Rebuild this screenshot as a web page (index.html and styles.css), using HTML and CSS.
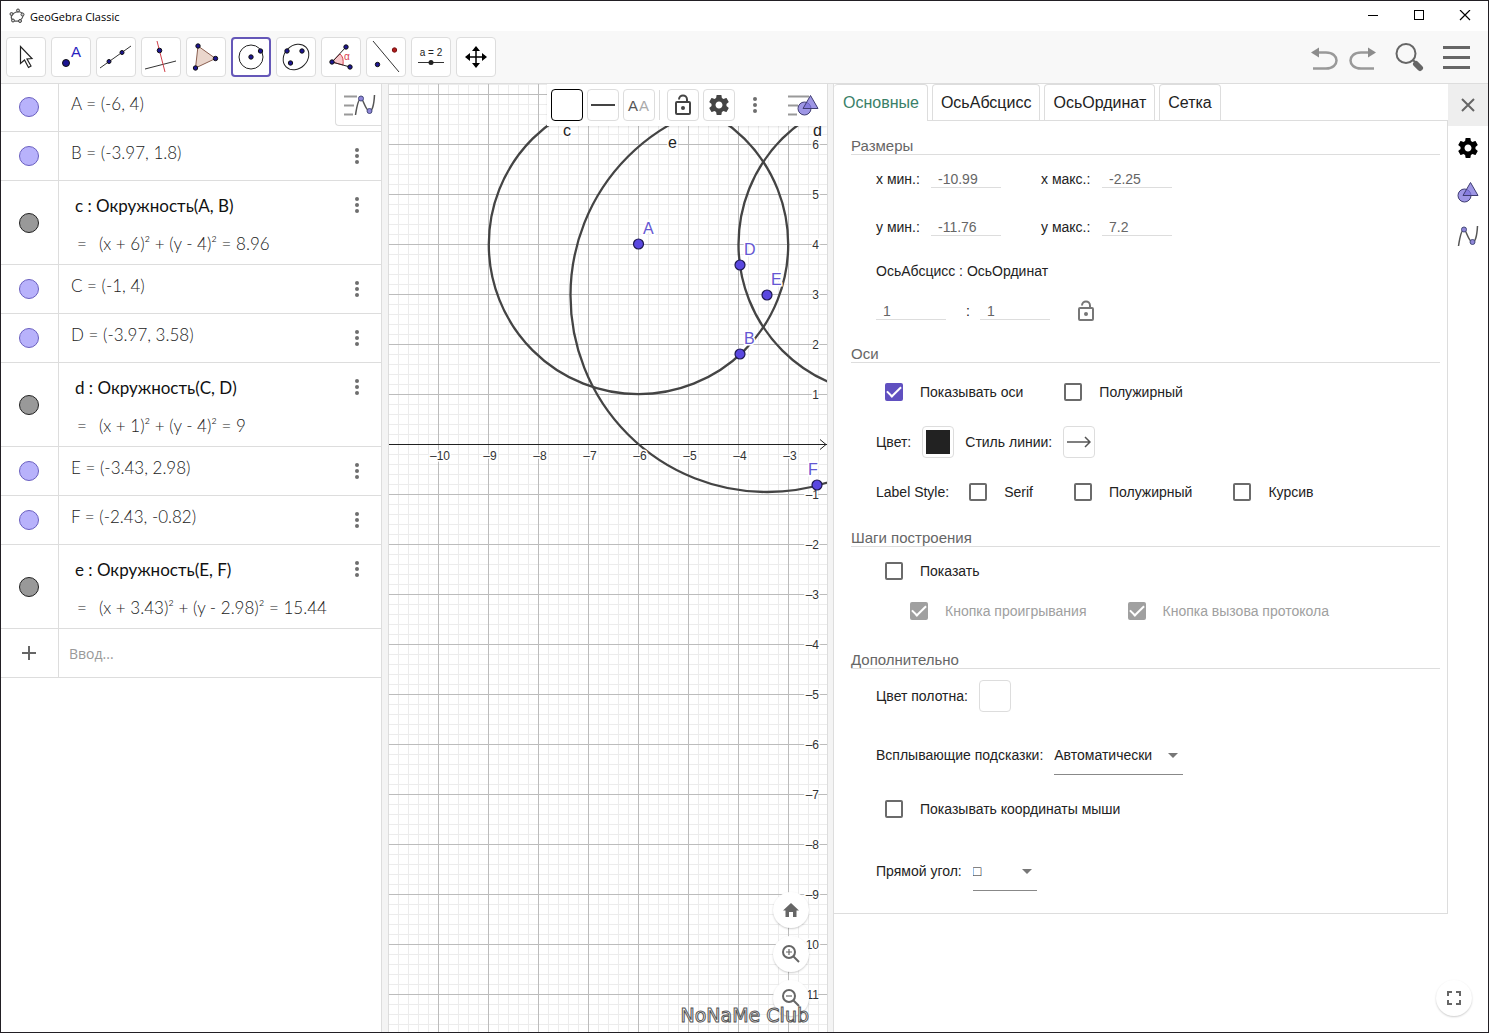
FILE: index.html
```html
<!DOCTYPE html>
<html lang="ru">
<head>
    <meta charset="UTF-8">
    <meta name="viewport" content="width=device-width, initial-scale=1.0">
    <title>GeoGebra Classic</title>
    <link rel="stylesheet" href="styles.css">
</head>
<body>
    <!-- Shared icons -->
    <svg class="defs" width="0" height="0" aria-hidden="true">
        <symbol id="dots" viewBox="0 0 24 24">
            <g fill="#6e6e6e"><circle cx="12" cy="6" r="2"/><circle cx="12" cy="12" r="2"/><circle cx="12" cy="18" r="2"/></g>
        </symbol>
        <symbol id="gear" viewBox="0 0 24 24">
            <path d="M19.43 12.98c.04-.32.07-.64.07-.98s-.03-.66-.07-.98l2.11-1.65c.19-.15.24-.42.12-.64l-2-3.46c-.12-.22-.39-.3-.61-.22l-2.49 1c-.52-.4-1.08-.73-1.69-.98l-.38-2.65C14.46 2.18 14.25 2 14 2h-4c-.25 0-.46.18-.49.42l-.38 2.65c-.61.25-1.17.59-1.69.98l-2.49-1c-.23-.09-.49 0-.61.22l-2 3.46c-.13.22-.07.49.12.64l2.11 1.65c-.04.32-.07.65-.07.98s.03.66.07.98l-2.11 1.65c-.19.15-.24.42-.12.64l2 3.46c.12.22.39.3.61.22l2.49-1c.52.4 1.08.73 1.69.98l.38 2.65c.03.24.24.42.49.42h4c.25 0 .46-.18.49-.42l.38-2.65c.61-.25 1.17-.59 1.69-.98l2.49 1c.23.09.49 0 .61-.22l2-3.46c.12-.22.07-.49-.12-.64l-2.11-1.65zM12 15.5c-1.93 0-3.5-1.57-3.5-3.5s1.57-3.5 3.5-3.5 3.5 1.57 3.5 3.5-1.57 3.5-3.5 3.5z"/>
        </symbol>
        <symbol id="lock" viewBox="0 0 24 24">
            <g fill="none" stroke="currentColor" stroke-width="2">
                <rect x="5" y="9" width="14" height="12" rx="1"/>
                <path d="M8 6.500C8 1 16 1 16 6.500V9"/>
            </g>
            <circle cx="12" cy="15" r="2" fill="currentColor"/>
        </symbol>
        <symbol id="shapes" viewBox="0 0 24 24">
            <g fill="#7d73dc" fill-opacity=".75" stroke="#3f3c72" stroke-width="1">
                <circle cx="8.500" cy="15.500" r="6.500"/>
                <path d="M14.500 2.500L22 15.500H7z"/>
            </g>
        </symbol>
        <symbol id="curve" viewBox="0 0 24 24">
            <path d="M2.500 22C4 12 6 5.500 8 5.500S12.500 17 16 18s5-7 5.500-16" fill="none" stroke="#555" stroke-width="1.500"/>
            <g fill="#8f86d8" stroke="#444a7a"><circle cx="8" cy="5.500" r="2.500"/><circle cx="16.500" cy="18" r="2.500"/></g>
        </symbol>
    </svg>

    <div class="window">
        <header class="titlebar">
            <svg class="logo" width="16" height="16" viewBox="0 0 16 16">
                <ellipse cx="8" cy="8.500" rx="6" ry="4.500" fill="none" stroke="#555" stroke-width="1.200" transform="rotate(-20 8 8)"/>
                <g fill="#ccc" stroke="#444" stroke-width="1">
                    <circle cx="9" cy="2.500" r="1.500"/><circle cx="2.500" cy="6" r="1.500"/><circle cx="13.500" cy="6.500" r="1.500"/><circle cx="4" cy="12.500" r="1.500"/><circle cx="11" cy="13" r="1.500"/>
                </g>
            </svg>
            <span class="title">GeoGebra Classic</span>
            <div class="window-buttons">
                <button aria-label="Свернуть"><svg width="12" height="12"><path d="M1 5.500h10" stroke="#000"/></svg></button>
                <button aria-label="Развернуть"><svg width="12" height="12"><rect x="1.500" y=".500" width="9" height="9" fill="none" stroke="#000"/></svg></button>
                <button aria-label="Закрыть окно"><svg width="12" height="12"><path d="M1 0l10 10M11 0L1 10" stroke="#000" stroke-width="1.200"/></svg></button>
            </div>
        </header>

        <nav class="toolbar">
            <button class="tool" aria-label="Перемещать">
                <svg width="32" height="32"><path d="M10.500 5.500v17l4-3.500 4 7.500 2.500-1.500-4-7 5-.500z" fill="#fff" stroke="#222" stroke-width="1.200"/></svg>
            </button>
            <button class="tool" aria-label="Точка">
                <svg width="32" height="32"><circle cx="11" cy="22" r="3.500" fill="#1c1593" stroke="#111"/><text x="16" y="16" font-size="15" fill="#2a1fc0">A</text></svg>
            </button>
            <button class="tool" aria-label="Прямая">
                <svg width="32" height="32"><path d="M0 27L31 5" stroke="#333"/><g fill="#1c1593" stroke="#111"><circle cx="9" cy="20.500" r="2"/><circle cx="22" cy="11.500" r="2"/></g></svg>
            </button>
            <button class="tool" aria-label="Перпендикулярная прямая">
                <svg width="32" height="32"><path d="M0 28l31-8" stroke="#333"/><path d="M12 0l8 31" stroke="#d0404a"/><circle cx="14.500" cy="9.500" r="2.300" fill="#1c1593" stroke="#111"/></svg>
            </button>
            <button class="tool" aria-label="Многоугольник">
                <svg width="32" height="32"><path d="M8 5l17.500 12.500L5.500 27z" fill="#ead6cc" stroke="#8a5f50"/><g fill="#1c1593" stroke="#111"><circle cx="8" cy="5" r="2.200"/><circle cx="25.500" cy="17.500" r="2.200"/><circle cx="5.500" cy="27" r="2.200"/></g></svg>
            </button>
            <button class="tool active" aria-label="Окружность по центру и точке">
                <svg width="32" height="32"><circle cx="16" cy="16" r="12" fill="none" stroke="#222"/><g fill="#1c1593" stroke="#111"><circle cx="16" cy="16" r="2.200"/><circle cx="25.500" cy="10" r="2.200"/></g></svg>
            </button>
            <button class="tool" aria-label="Эллипс">
                <svg width="32" height="32"><ellipse cx="16" cy="16" rx="14" ry="11.500" transform="rotate(-45 16 16)" fill="none" stroke="#222"/><g fill="#1c1593" stroke="#111"><circle cx="7" cy="10" r="2.200"/><circle cx="22" cy="10" r="2.200"/><circle cx="10.500" cy="22" r="2.200"/></g></svg>
            </button>
            <button class="tool" aria-label="Угол">
                <svg width="32" height="32"><path d="M7 21l8-8q4 3 3 11z" fill="#f8c8cc" stroke="#d84050"/><path d="M7 21L21 6M7 21l18 5" stroke="#222"/><g fill="#1c1593" stroke="#111"><circle cx="7" cy="21" r="2.200"/><circle cx="21" cy="6" r="2.200"/><circle cx="25" cy="26" r="2.200"/></g><text x="19" y="19" font-size="10" fill="#d84050">α</text></svg>
            </button>
            <button class="tool" aria-label="Отражение относительно прямой">
                <svg width="32" height="32"><path d="M3 0l26 31" stroke="#333"/><circle cx="7.500" cy="23.500" r="2.200" fill="#1c1593" stroke="#111"/><circle cx="24.500" cy="9" r="2.200" fill="#b01c1c" stroke="#711"/></svg>
            </button>
            <button class="tool" aria-label="Ползунок">
                <svg width="32" height="32"><text x="16" y="15" font-size="10" text-anchor="middle" fill="#222">a = 2</text><path d="M3 21.500h26" stroke="#333"/><circle cx="16" cy="21.500" r="2.500" fill="#222"/></svg>
            </button>
            <button class="tool" aria-label="Переместить чертёж">
                <svg width="32" height="32"><path d="M16 8v16M8 16h16" stroke="#000" stroke-width="1.500"/><path d="M16 5l4 5h-8zM16 27l4-5h-8zM5 16l5-4v8zM27 16l-5-4v8z"/></svg>
            </button>

            <div class="toolbar-right">
                <button aria-label="Отменить"><svg width="30" height="30"><path d="M7 10.500h9c14 0 14 16 0 16H3" fill="none" stroke="#999" stroke-width="2.500"/><path d="M1 10.500l8-5v10z" fill="#8c8c8c"/></svg></button>
                <button aria-label="Повторить"><svg width="30" height="30"><path d="M23 10.500h-9c-14 0-14 16 0 16h13" fill="none" stroke="#999" stroke-width="2.500"/><path d="M29 10.500l-8-5v10z" fill="#8c8c8c"/></svg></button>
                <button class="search" aria-label="Поиск"><svg width="30" height="30"><circle cx="11" cy="11.500" r="9.500" fill="none" stroke="#666" stroke-width="2"/><path d="M18 18l3 3" stroke="#666" stroke-width="2"/><path d="M21 22l4 4" stroke="#666" stroke-width="6" stroke-linecap="round"/></svg></button>
                <button class="menu" aria-label="Меню"><svg width="30" height="30"><path d="M2 5.500h27M2 15.500h27M2 25.500h27" stroke="#666" stroke-width="3"/></svg></button>
            </div>
        </nav>

        <main class="views">
            <section class="algebra">
                <button class="view-toggle" aria-label="Панель объектов">
                    <svg width="34" height="24"><path d="M0 3.500h13M0 12.500h10M0 21.500h9" stroke="#999" stroke-width="2"/><use href="#curve" x="9" y="0" width="24" height="24"/></svg>
                </button>
                <ul class="objects">
                    <li class="object">
                        <div class="marble-cell"><button class="marble" aria-label="A"></button></div>
                        <div class="expression">A = (-6, 4)</div>
                    </li>
                    <li class="object">
                        <div class="marble-cell"><button class="marble" aria-label="B"></button></div>
                        <div class="expression">B = (-3.97, 1.8)</div>
                        <button class="more" aria-label="Ещё"><svg width="24" height="24"><use href="#dots"/></svg></button>
                    </li>
                    <li class="object tall">
                        <div class="marble-cell"><button class="marble grey" aria-label="c"></button></div>
                        <div class="expression">
                            <div class="command">c : Окружность(A, B)</div>
                            <div class="result">=<span class="equation">(x + 6)² + (y - 4)² = 8.96</span></div>
                        </div>
                        <button class="more" aria-label="Ещё"><svg width="24" height="24"><use href="#dots"/></svg></button>
                    </li>
                    <li class="object">
                        <div class="marble-cell"><button class="marble" aria-label="C"></button></div>
                        <div class="expression">C = (-1, 4)</div>
                        <button class="more" aria-label="Ещё"><svg width="24" height="24"><use href="#dots"/></svg></button>
                    </li>
                    <li class="object">
                        <div class="marble-cell"><button class="marble" aria-label="D"></button></div>
                        <div class="expression">D = (-3.97, 3.58)</div>
                        <button class="more" aria-label="Ещё"><svg width="24" height="24"><use href="#dots"/></svg></button>
                    </li>
                    <li class="object tall">
                        <div class="marble-cell"><button class="marble grey" aria-label="d"></button></div>
                        <div class="expression">
                            <div class="command">d : Окружность(C, D)</div>
                            <div class="result">=<span class="equation">(x + 1)² + (y - 4)² = 9</span></div>
                        </div>
                        <button class="more" aria-label="Ещё"><svg width="24" height="24"><use href="#dots"/></svg></button>
                    </li>
                    <li class="object">
                        <div class="marble-cell"><button class="marble" aria-label="E"></button></div>
                        <div class="expression">E = (-3.43, 2.98)</div>
                        <button class="more" aria-label="Ещё"><svg width="24" height="24"><use href="#dots"/></svg></button>
                    </li>
                    <li class="object">
                        <div class="marble-cell"><button class="marble" aria-label="F"></button></div>
                        <div class="expression">F = (-2.43, -0.82)</div>
                        <button class="more" aria-label="Ещё"><svg width="24" height="24"><use href="#dots"/></svg></button>
                    </li>
                    <li class="object tall">
                        <div class="marble-cell"><button class="marble grey" aria-label="e"></button></div>
                        <div class="expression">
                            <div class="command">e : Окружность(E, F)</div>
                            <div class="result">=<span class="equation">(x + 3.43)² + (y - 2.98)² = 15.44</span></div>
                        </div>
                        <button class="more" aria-label="Ещё"><svg width="24" height="24"><use href="#dots"/></svg></button>
                    </li>
                    <li class="object">
                        <div class="marble-cell"><svg width="16" height="16"><path d="M8 1v14M1 8h14" stroke="#666" stroke-width="2"/></svg></div>
                        <input class="new-object" type="text" placeholder="Ввод..." aria-label="Ввод">
                    </li>
                </ul>
            </section>

            <div class="splitter"></div>

            <section class="graphics">
                <svg class="plot" width="100%" height="100%">
                    <defs>
                        <pattern id="minor" x="9" y="0" width="10" height="10" patternUnits="userSpaceOnUse">
                            <path d="M0 .500H10M.500 0V10" stroke="#ececec"/>
                        </pattern>
                        <pattern id="major" x="49" y="10" width="50" height="50" patternUnits="userSpaceOnUse">
                            <path d="M0 .500H50M.500 0V50" stroke="#bcbcbc"/>
                        </pattern>
                    </defs>
                    <rect width="100%" height="100%" fill="url(#minor)"/>
                    <rect width="100%" height="100%" fill="url(#major)"/>
                    <path d="M0 360.500h2000" stroke="#222"/>
                    <svg x="100%" y="0" overflow="visible"><path d="M-7 355.500l6 5-6 5" fill="none" stroke="#222"/></svg>

                    <g fill="none" stroke="#444" stroke-width="2.300">
                        <circle cx="249.500" cy="160.500" r="149.700"/>
                        <circle cx="499.500" cy="160.500" r="150"/>
                        <circle cx="378" cy="211.500" r="196.500"/>
                    </g>

                    <g class="ticks" text-anchor="middle">
                        <text x="51" y="376">–10</text>
                        <text x="101" y="376">–9</text>
                        <text x="151" y="376">–8</text>
                        <text x="201" y="376">–7</text>
                        <text x="251" y="376">–6</text>
                        <text x="301" y="376">–5</text>
                        <text x="351" y="376">–4</text>
                        <text x="401" y="376">–3</text>
                    </g>
                    <svg x="100%" y="0" overflow="visible">
                        <g class="ticks" text-anchor="end">
                            <text x="-8" y="65">6</text>
                            <text x="-8" y="115">5</text>
                            <text x="-8" y="165">4</text>
                            <text x="-8" y="215">3</text>
                            <text x="-8" y="265">2</text>
                            <text x="-8" y="315">1</text>
                            <text x="-8" y="415">–1</text>
                            <text x="-8" y="465">–2</text>
                            <text x="-8" y="515">–3</text>
                            <text x="-8" y="565">–4</text>
                            <text x="-8" y="615">–5</text>
                            <text x="-8" y="665">–6</text>
                            <text x="-8" y="715">–7</text>
                            <text x="-8" y="765">–8</text>
                            <text x="-8" y="815">–9</text>
                            <text x="-8" y="865">10</text>
                            <text x="-8" y="915">11</text>
                        </g>
                    </svg>

                    <g fill="#5a48e0" stroke="#1d1850" stroke-width="1.200">
                        <circle cx="249.500" cy="160" r="5"/>
                        <circle cx="351" cy="270" r="5"/>
                        <circle cx="351" cy="181" r="5"/>
                        <circle cx="378" cy="211" r="5"/>
                        <circle cx="428" cy="401" r="5"/>
                    </g>
                    <g class="point-labels">
                        <text x="254" y="150">A</text>
                        <text x="355" y="260">B</text>
                        <text x="355" y="171">D</text>
                        <text x="382" y="201">E</text>
                        <text x="419" y="391">F</text>
                    </g>
                    <g class="circle-labels">
                        <text x="174" y="52">c</text>
                        <text x="279" y="64">e</text>
                        <text x="424" y="52">d</text>
                    </g>
                </svg>

                <div class="stylebar">
                    <button class="style-button selected" aria-label="Цвет объекта"></button>
                    <button class="style-button" aria-label="Стиль линии"><svg width="24" height="24"><path d="M0 12h24" stroke="#444" stroke-width="2"/></svg></button>
                    <button class="style-button" aria-label="Надпись"><svg width="24" height="24"><text x="1" y="18" font-size="15" fill="#555">A</text><text x="12" y="18" font-size="15" fill="#aaa">A</text></svg></button>
                    <span class="divider"></span>
                    <button class="style-button locked" aria-label="Закрепить"><svg width="24" height="24"><use href="#lock"/></svg></button>
                    <button class="style-button" aria-label="Настройки объекта"><svg width="24" height="24" fill="#444"><use href="#gear"/></svg></button>
                    <button class="style-button plain" aria-label="Ещё"><svg width="24" height="24"><use href="#dots"/></svg></button>
                    <button class="stylebar-toggle" aria-label="Панель стилей"><svg width="34" height="24"><path d="M1 3.500h21M1 12.500h10M1 21.500h9" stroke="#999" stroke-width="2"/><use href="#shapes" x="9" y="0" width="24" height="24"/></svg></button>
                </div>

                <div class="zoom-buttons">
                    <button class="round" aria-label="Исходный вид"><svg width="20" height="20"><path d="M10 3L2 10.500h2.500V17H8v-5h4v5h3.500v-6.500H18z" fill="#666"/></svg></button>
                    <button class="round" aria-label="Увеличить"><svg width="20" height="20"><g fill="none" stroke="#666" stroke-width="2"><circle cx="8" cy="8" r="6"/><path d="M12 12l6 6"/><path d="M8 5v6M5 8h6" stroke-width="1.200"/></g></svg></button>
                    <button class="round" aria-label="Уменьшить"><svg width="20" height="20"><g fill="none" stroke="#666" stroke-width="2"><circle cx="8" cy="8" r="6"/><path d="M12 12l6 6"/><path d="M5 8h6" stroke-width="1.200"/></g></svg></button>
                </div>
                <div class="watermark">NoNaMe Club</div>
            </section>

            <div class="splitter"></div>

            <section class="properties">
                <div class="settings">
                    <div class="tabs" role="tablist">
                        <button class="tab active" role="tab" aria-selected="true">Основные</button>
                        <button class="tab" role="tab">ОсьАбсцисс</button>
                        <button class="tab" role="tab">ОсьОрдинат</button>
                        <button class="tab" role="tab">Сетка</button>
                    </div>
                    <form class="panel">
                        <h2>Размеры</h2>
                        <div class="group">
                            <div class="bounds">
                                <label for="xmin">x мин.:</label>
                                <input class="field" id="xmin" type="text" value="-10.99">
                                <label class="second" for="xmax">x макс.:</label>
                                <input class="field" id="xmax" type="text" value="-2.25">
                                <label for="ymin">y мин.:</label>
                                <input class="field" id="ymin" type="text" value="-11.76">
                                <label class="second" for="ymax">y макс.:</label>
                                <input class="field" id="ymax" type="text" value="7.2">
                            </div>
                            <div class="row short">ОсьАбсцисс : ОсьОрдинат</div>
                            <div class="row short ratio">
                                <input class="field" type="text" value="1" aria-label="ОсьАбсцисс">
                                <span class="colon">:</span>
                                <input class="field" type="text" value="1" aria-label="ОсьОрдинат">
                                <button class="ratio-lock" type="button" aria-label="Закрепить отношение"><svg width="24" height="24"><use href="#lock"/></svg></button>
                            </div>
                        </div>

                        <h2>Оси</h2>
                        <div class="group axes">
                            <div class="row">
                                <label class="check"><input type="checkbox" checked>Показывать оси</label>
                                <label class="check"><input type="checkbox">Полужирный</label>
                            </div>
                            <div class="row">
                                <span>Цвет:</span>
                                <button class="swatch" type="button" aria-label="Цвет"><span class="black"></span></button>
                                <span>Стиль линии:</span>
                                <button class="swatch" type="button" aria-label="Стиль линии"><svg width="24" height="24"><path d="M0 12h23M18 7l5 5-5 5" fill="none" stroke="#555" stroke-width="1.500"/></svg></button>
                            </div>
                            <div class="row">
                                <span>Label Style:</span>
                                <label class="check"><input type="checkbox">Serif</label>
                                <label class="check"><input type="checkbox">Полужирный</label>
                                <label class="check"><input type="checkbox">Курсив</label>
                            </div>
                        </div>

                        <h2>Шаги построения</h2>
                        <div class="group steps">
                            <div class="row short">
                                <label class="check"><input type="checkbox">Показать</label>
                            </div>
                            <div class="row short indented">
                                <label class="check"><input type="checkbox" checked disabled>Кнопка проигрывания</label>
                                <label class="check"><input type="checkbox" checked disabled>Кнопка вызова протокола</label>
                            </div>
                        </div>

                        <h2>Дополнительно</h2>
                        <div class="group extra">
                            <div class="row">
                                <span>Цвет полотна:</span>
                                <button class="swatch" type="button" aria-label="Цвет полотна"></button>
                            </div>
                            <div class="row high">
                                <label for="tooltips">Всплывающие подсказки:</label>
                                <span class="select"><select id="tooltips"><option>Автоматически</option></select></span>
                            </div>
                            <div class="row short">
                                <label class="check"><input type="checkbox">Показывать координаты мыши</label>
                            </div>
                            <div class="row high">
                                <label for="angle">Прямой угол:</label>
                                <span class="select narrow"><select id="angle"><option>□</option></select></span>
                            </div>
                        </div>
                    </form>
                </div>

                <aside class="side">
                    <button class="close" aria-label="Закрыть"><svg width="16" height="16"><path d="M2 2l12 12M14 2L2 14" stroke="#666" stroke-width="2"/></svg></button>
                    <button aria-label="Настройки"><svg width="24" height="24"><use href="#gear"/></svg></button>
                    <button aria-label="Полотно"><svg width="24" height="24"><use href="#shapes"/></svg></button>
                    <button aria-label="Объекты"><svg width="24" height="24"><use href="#curve"/></svg></button>
                </aside>
                <button class="round fullscreen" aria-label="Во весь экран"><svg width="16" height="16"><path d="M2 6V2h4M10 2h4v4M14 10v4h-4M6 14H2v-4" fill="none" stroke="#666" stroke-width="2"/></svg></button>
            </section>
        </main>
    </div>
</body>
</html>
```
FILE: styles.css
```css
* {
    box-sizing: border-box;
}

body {
    margin: 0;
    font-family: "Liberation Sans", Arial, sans-serif;
    font-size: 14px;
    color: #222;
}

button {
    display: flex;
    align-items: center;
    justify-content: center;
    padding: 0;
    border: none;
    background: none;
    font-family: inherit;
    color: inherit;
    cursor: pointer;
}

svg {
    display: block;
    flex-shrink: 0;
}

.defs {
    position: absolute;
}

.window {
    display: flex;
    flex-direction: column;
    height: 100vh;
    border: 1px solid #221f24;
    background-color: #fff;
    overflow: hidden;
}

/* Title bar */
.titlebar {
    display: flex;
    align-items: center;
    height: 30px;
    padding-left: 8px;
}

.title {
    margin-left: 5px;
    font-family: "Open Sans", sans-serif;
    font-size: 11px;
    color: #000;
}

.window-buttons {
    display: flex;
    margin-left: auto;
}

.window-buttons button {
    width: 46px;
    height: 30px;
}

/* Toolbar */
.toolbar {
    display: flex;
    align-items: center;
    gap: 5px;
    height: 53px;
    padding: 0 17px 0 5px;
    background-color: #f8f8f8;
    border-bottom: 1px solid #ddd;
}

.tool {
    width: 40px;
    height: 40px;
    border: 1px solid #ddd;
    border-radius: 4px;
    background-color: #fff;
}

.tool.active {
    border: 2px solid #6557b8;
}

.toolbar-right {
    display: flex;
    align-items: center;
    gap: 7px;
    margin-left: auto;
}

.toolbar-right .search {
    margin-left: 11px;
}

.toolbar-right .menu {
    margin-left: 9px;
}

.views {
    display: grid;
    grid-template-columns: minmax(0, 380fr) 8px minmax(0, 438fr) 7px minmax(0, 654fr);
    flex: 1;
    min-height: 0;
}

.splitter {
    background-color: #f4f4f4;
    border-left: 1px solid #ddd;
    border-right: 1px solid #ddd;
}

/* Algebra view */
.algebra {
    position: relative;
}

.view-toggle {
    position: absolute;
    top: 0;
    right: 0;
    width: 46px;
    height: 42px;
    padding-left: 4px;
    background-color: #fff;
    border: 1px solid #ddd;
    border-width: 0 0 1px 1px;
    border-bottom-left-radius: 4px;
}

.objects {
    margin: -1px 0 0;
    padding: 0;
    list-style: none;
}

.object {
    display: flex;
    height: 49px;
    border-bottom: 1px solid #ddd;
}

.object.tall {
    height: 84px;
}

.marble-cell {
    display: flex;
    align-items: center;
    justify-content: center;
    width: 58px;
    padding-right: 1px;
    border-right: 1px solid #ddd;
}

.marble {
    width: 20px;
    height: 20px;
    border: 1px solid #6a5fc0;
    border-radius: 50%;
    background-color: #b8b2fb;
}

.marble.grey {
    border-color: #222;
    background-color: #999;
}

.expression {
    flex: 1;
    padding-left: 12px;
    font-family: Lato, sans-serif;
    font-size: 17px;
    font-weight: 300;
    line-height: 42px;
    color: #222;
    white-space: nowrap;
}

.command {
    padding: 7px 0 0 4px;
    font-weight: 400;
    line-height: 36px;
    color: #111;
}

.result {
    padding-left: 6px;
    line-height: 40px;
}

.equation {
    margin-left: 12px;
}

.more {
    width: 48px;
    height: 48px;
}

.new-object {
    flex: 1;
    min-width: 0;
    padding: 0 10px;
    border: none;
    background: none;
    font-family: "Open Sans", sans-serif;
    font-size: 14px;
    color: #333;
}

.new-object::placeholder {
    color: #999;
}

/* Graphics view */
.graphics {
    position: relative;
    overflow: hidden;
}

.plot {
    position: absolute;
}

.ticks,
.point-labels,
.circle-labels {
    stroke: #fff;
    stroke-width: 3px;
    paint-order: stroke;
}

.ticks {
    font-size: 12px;
    fill: #333;
}

.point-labels {
    font-size: 16px;
    fill: #6557d2;
}

.circle-labels {
    font-size: 16px;
    fill: #222;
}

.stylebar {
    position: absolute;
    top: 0;
    right: 0;
    display: flex;
    align-items: center;
    gap: 4px;
    height: 42px;
    padding: 0 6px 0 4px;
    background-color: #fff;
    box-shadow: 0 1px 2px rgba(0, 0, 0, 0.1);
}

.style-button {
    width: 32px;
    height: 32px;
    border: 1px solid #ddd;
    border-radius: 4px;
}

.style-button.selected {
    border-color: #000;
}

.style-button.plain {
    border: none;
}

.style-button.locked {
    color: #444;
}

.divider {
    width: 1px;
    height: 30px;
    margin-right: 3px;
    background-color: #ddd;
}

.stylebar-toggle {
    margin-left: 12px;
}

.zoom-buttons {
    position: absolute;
    right: 18px;
    bottom: 16px;
    display: flex;
    flex-direction: column;
    gap: 8px;
}

.round {
    width: 36px;
    height: 36px;
    border-radius: 50%;
    background-color: #fff;
    box-shadow: 0 1px 2px rgba(0, 0, 0, 0.2);
}

.watermark {
    position: absolute;
    right: 18px;
    bottom: 5px;
    font-family: "DejaVu Sans", sans-serif;
    font-size: 19px;
    line-height: 24px;
    color: #fff;
    -webkit-text-stroke: 1px #555;
}

/* Settings */
.properties {
    position: relative;
    display: flex;
}

.settings {
    flex: 1;
    min-width: 0;
}

.tabs {
    display: flex;
    align-items: flex-end;
    gap: 4px;
    height: 37px;
    border-bottom: 1px solid #ddd;
}

.tab {
    height: 36px;
    padding: 0 8px;
    border: 1px solid #ddd;
    border-bottom: none;
    border-radius: 4px 4px 0 0;
    background-color: #fff;
    font-size: 16px;
}

.tab.active {
    height: 37px;
    margin-bottom: -1px;
    padding-left: 9px;
    border-left: none;
    color: #3a8068;
}

.panel {
    padding: 14px 7px 8px 17px;
    border: 1px solid #ddd;
    border-width: 0 1px 1px 0;
}

.panel h2 {
    margin: 0;
    height: 20px;
    border-bottom: 1px solid #ddd;
    font-size: 15px;
    font-weight: normal;
    line-height: 22px;
    color: #666;
}

.group {
    padding: 0 0 12px 25px;
}

.group.axes {
    padding-top: 4px;
    padding-bottom: 10px;
}

.group.steps {
    padding-top: 4px;
    padding-bottom: 18px;
}

.group.extra {
    padding-top: 2px;
    padding-bottom: 0;
}

.row {
    display: flex;
    align-items: center;
    gap: 11px;
    height: 50px;
}

.row.short {
    height: 40px;
}

.row.high {
    height: 68px;
}

.row.high:last-child {
    margin-top: 8px;
}

.row.indented {
    padding-left: 25px;
}

.row.ratio {
    gap: 10px;
}

.bounds {
    display: grid;
    grid-template-columns: 55px 70px 101px 70px;
    grid-auto-rows: 48px;
    align-items: center;
}

.bounds .second {
    padding-left: 40px;
}

.field {
    width: 70px;
    height: 18px;
    padding: 0 7px;
    border: none;
    border-bottom: 1px solid #ddd;
    background: none;
    font-family: inherit;
    font-size: 14px;
    color: #666;
}

.colon {
    width: 14px;
    text-align: right;
}

.ratio-lock {
    margin-left: 14px;
    color: #777;
}

.check {
    display: flex;
    align-items: center;
    gap: 17px;
    margin-right: 21px;
    padding-left: 9px;
}

.check input {
    display: grid;
    place-content: center;
    appearance: none;
    width: 18px;
    height: 18px;
    margin: 0;
    border: 2px solid #6b6b6b;
    border-radius: 2px;
}

.check input:checked {
    border-color: #6050c0;
    background-color: #6050c0;
}

.check input:checked::before {
    content: "";
    width: 6px;
    height: 12px;
    margin-bottom: 4px;
    border: solid #fff;
    border-width: 0 2px 2px 0;
    transform: rotate(45deg);
}

.check input:disabled {
    border-color: #a0a0a0;
    background-color: #a0a0a0;
}

.check:has(input:disabled) {
    color: #a0a0a0;
}

.swatch {
    width: 32px;
    height: 32px;
    border: 1px solid #ddd;
    border-radius: 4px;
}

.swatch .black {
    width: 24px;
    height: 24px;
    background-color: #222;
}

.select {
    position: relative;
    width: 129px;
}

.select.narrow {
    width: 64px;
}

.select::after {
    content: "";
    position: absolute;
    top: 18px;
    right: 5px;
    border: 5px solid transparent;
    border-top-color: #777;
    pointer-events: none;
}

.select select {
    appearance: none;
    width: 100%;
    height: 40px;
    padding: 0;
    border: none;
    border-bottom: 1px solid #888;
    border-radius: 0;
    background: none;
    font-family: inherit;
    font-size: 14px;
    color: #222;
}

/* Side bar */
.side {
    width: 40px;
}

.side button {
    width: 40px;
    height: 44px;
}

.side .close {
    height: 42px;
    background-color: #eee;
}

.fullscreen {
    position: absolute;
    right: 16px;
    bottom: 16px;
}
```
